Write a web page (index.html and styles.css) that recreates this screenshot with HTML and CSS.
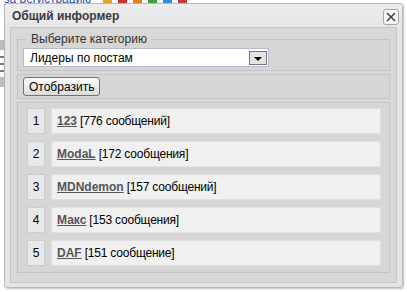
FILE: index.html
```html
<!DOCTYPE html>
<html lang="ru">
<head>
    <meta charset="UTF-8">
    <title>Общий информер</title>
    <link rel="stylesheet" href="styles.css">
</head>
<body>
    <!-- страница за окном -->
    <div class="page">
        <div class="page-top">
            <a href="#">за регистрацию</a>
            <span class="ico i1"></span><span class="ico i2"></span><span class="ico i3"></span><span class="ico i4"></span><span class="ico i5"></span><span class="ico i6"></span>
        </div>
        <div class="page-side">
            <div class="side-bar"></div>
            <div class="side-line"></div>
            <div class="side-line"></div>
            <div class="side-line"></div>
            <div class="side-bar"></div>
        </div>
    </div>

    <div class="dialog">
        <div class="dialog-title">
            <span>Общий информер</span>
            <span class="close">
                <svg width="12" height="12" viewBox="0 0 12 12"><path d="M2 2 L10 10 M10 2 L2 10" stroke="#444" stroke-width="1.6"/></svg>
            </span>
        </div>
        <div class="dialog-body">
            <fieldset class="box">
                <legend>Выберите категорию</legend>
                <div class="select">
                    <span>Лидеры по постам</span>
                    <span class="arrow"></span>
                </div>
            </fieldset>
            <div class="box box-btn">
                <button>Отобразить</button>
            </div>
            <div class="box list">
                <div class="item"><span class="num">1</span><span class="text"><a href="#">123</a> [776 сообщений]</span></div>
                <div class="item"><span class="num">2</span><span class="text"><a href="#">ModaL</a> [172 сообщения]</span></div>
                <div class="item"><span class="num">3</span><span class="text"><a href="#">MDNdemon</a> [157 сообщений]</span></div>
                <div class="item"><span class="num">4</span><span class="text"><a href="#">Макс</a> [153 сообщения]</span></div>
                <div class="item"><span class="num">5</span><span class="text"><a href="#">DAF</a> [151 сообщение]</span></div>
            </div>
        </div>
    </div>
</body>
</html>
```

FILE: styles.css
```css
* {
    margin: 0;
    padding: 0;
    box-sizing: border-box;
}

body {
    width: 407px;
    height: 292px;
    overflow: hidden;
    background: #fff;
    font-family: "Liberation Sans", Arial, sans-serif;
    font-size: 12px;
    color: #000;
}

/* фон страницы (прокручен, видна только нижняя часть строки) */
.page-top {
    height: 5px;
    padding-left: 4px;
    display: flex;
    align-items: flex-end;
    gap: 6px;
}
.page-top a {
    color: #2a4fa8;
    line-height: 12px;
    margin-right: 6px;
}
.ico {
    width: 9px;
    height: 5px;
}
.i1 { background: #e8a020; }
.i2 { background: #d03030; }
.i3 { background: #e08020; }
.i4 { background: #40a040; }
.i5 { background: #3090d0; }
.i6 { background: #c04040; }

.page-side {
    width: 5px;
    margin-top: 35px;
}
.side-bar {
    height: 10px;
    background: #bdbdbd;
    margin-bottom: 6px;
}
.side-line {
    height: 2px;
    background: #777;
    margin-bottom: 5px;
}

/* окно */
.dialog {
    position: absolute;
    left: 4px;
    top: 3px;
    width: 399px;
    height: 285px;
    background: linear-gradient(#ededed, #e4e4e4 30px);
    border: 1px solid #b8b8b8;
    border-radius: 3px;
    box-shadow: 1px 1px 2px rgba(0, 0, 0, 0.25);
    padding: 0 5px 4px 5px;
}

.dialog-title {
    height: 23px;
    display: flex;
    align-items: center;
    justify-content: space-between;
    padding-left: 2px;
    font-weight: bold;
    font-size: 12px;
    color: #3a3a3a;
}

.close {
    width: 16px;
    height: 16px;
    margin-right: -2px;
    margin-top: 2px;
    border: 1px solid #a8a8a8;
    border-radius: 3px;
    background: #f8f8f8;
    display: flex;
    align-items: center;
    justify-content: center;
}

.dialog-body {
    height: 256px;
    background: #d8d8d8;
    border: 1px solid #c6c6c6;
    padding: 5px 6px 9px 6px;
}

.box {
    border: 1px solid #c4c4c4;
    background: #d6d6d6;
    margin-bottom: 3px;
}

fieldset.box {
    padding: 3px 5px 3px 5px;
    min-width: 0;
}
legend {
    margin-left: 4px;
    padding: 0 4px;
    color: #333;
    line-height: 12px;
}

.select {
    width: 246px;
    height: 19px;
    background: #fff;
    border: 1px solid #b4bacf;
    display: flex;
    align-items: center;
    justify-content: space-between;
    padding: 0 1px 0 6px;
}
.arrow {
    width: 18px;
    height: 14px;
    border: 1px solid #777;
    background: #e4e4e4;
    position: relative;
}
.arrow::after {
    content: "";
    position: absolute;
    left: 4px;
    top: 5px;
    border-left: 4px solid transparent;
    border-right: 4px solid transparent;
    border-top: 4px solid #000;
}

.box-btn {
    height: 25px;
    padding: 2px 5px;
}
button {
    height: 19px;
    padding: 0 5px;
    font-family: "Liberation Sans", Arial, sans-serif;
    font-size: 12px;
    color: #000;
    border: 1px solid #707070;
    border-radius: 3px;
    background: linear-gradient(#fcfcfc, #dcdcdc);
}

.list {
    height: 171px;
    padding: 5px 8px 0 9px;
    display: flex;
    flex-direction: column;
    gap: 7px;
    margin-bottom: 0;
}
.item {
    display: flex;
    gap: 6px;
    height: 26px;
}
.num {
    width: 18px;
    background: #e8e8e8;
    border: 1px solid #cdcdcd;
    display: flex;
    align-items: center;
    justify-content: center;
}
.text {
    flex: 1;
    background: #f0f0f0;
    border: 1px solid #e0e0e0;
    display: flex;
    align-items: center;
    padding-left: 5px;
    gap: 3px;
    letter-spacing: -0.2px;
}
.text a {
    color: #555;
    font-weight: bold;
    letter-spacing: 0;
}
```
